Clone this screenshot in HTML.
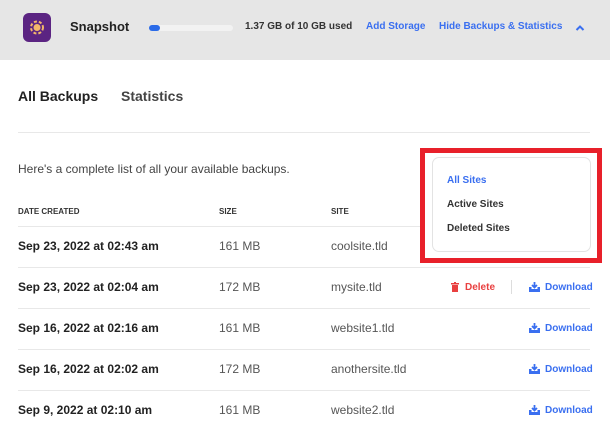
<!DOCTYPE html>
<html><head><style>
*{margin:0;padding:0;box-sizing:border-box}
body{width:610px;height:428px;overflow:hidden;background:#fff;font-family:"Liberation Sans",Arial,sans-serif;position:relative;color:#222}
.hdr{position:absolute;left:0;top:0;width:610px;height:60px;background:#e6e6e6}
.abs{position:absolute;white-space:nowrap}
.blue{color:#3a6ff0}
.line{position:absolute;height:1px;background:#e8e8e8}
.th{font-size:8px;font-weight:bold;color:#333;top:207px}
.d{font-size:12px;font-weight:bold;color:#222}
.s{font-size:12px;color:#555}
.dl{font-size:10px;font-weight:bold;color:#3a6ff0}
</style></head><body>
<div class="hdr"></div>
<div class="abs" style="left:23px;top:13px;width:28px;height:29px;background:#5b2482;border-radius:6px">
<svg width="28" height="29" viewBox="0 0 28 29"><circle cx="14" cy="14.5" r="3.5" fill="#f3b86a"/><circle cx="14" cy="14.5" r="6" fill="none" stroke="#f3b86a" stroke-width="2" stroke-dasharray="3 2"/></svg></div>
<div class="abs" style="left:70px;top:19px;font-size:13px;font-weight:bold;color:#222">Snapshot</div>
<div class="abs" style="left:149px;top:25px;width:84px;height:6px;background:#f2f2f2;border-radius:3px"><div style="width:11px;height:6px;background:#2b6be8;border-radius:3px"></div></div>
<div class="abs" style="left:245px;top:21px;font-size:10px;font-weight:bold;color:#333">1.37 GB of 10 GB used</div>
<div class="abs blue" style="left:366px;top:21px;font-size:10px;font-weight:bold">Add Storage</div>
<div class="abs blue" style="left:439px;top:21px;font-size:10px;font-weight:bold">Hide Backups &amp; Statistics</div>
<svg class="abs" style="left:575px;top:24px" width="10" height="8" viewBox="0 0 10 8"><path d="M1.5 6L5 2.5 8.5 6" fill="none" stroke="#3a6ff0" stroke-width="2"/></svg>
<div class="abs" style="left:18px;top:88px;font-size:14px;font-weight:bold;color:#222">All Backups</div>
<div class="abs" style="left:121px;top:88px;font-size:14px;font-weight:bold;color:#444">Statistics</div>
<div class="line" style="left:18px;top:132px;width:572px"></div>
<div class="abs" style="left:18px;top:162px;font-size:12px;color:#444">Here's a complete list of all your available backups.</div>
<div class="abs th" style="left:18px">DATE CREATED</div>
<div class="abs th" style="left:219px">SIZE</div>
<div class="abs th" style="left:331px">SITE</div>
<div class="line" style="left:18px;top:226px;width:572px"></div>
<div class="line" style="left:18px;top:267px;width:572px"></div>
<div class="line" style="left:18px;top:308px;width:572px"></div>
<div class="line" style="left:18px;top:349px;width:572px"></div>
<div class="line" style="left:18px;top:390px;width:572px"></div>

<div class="abs d" style="left:18px;top:239px">Sep 23, 2022 at 02:43 am</div><div class="abs s" style="left:219px;top:239px">161 MB</div><div class="abs s" style="left:331px;top:239px">coolsite.tld</div>
<div class="abs d" style="left:18px;top:280px">Sep 23, 2022 at 02:04 am</div><div class="abs s" style="left:219px;top:280px">172 MB</div><div class="abs s" style="left:331px;top:280px">mysite.tld</div>
<div class="abs d" style="left:18px;top:321px">Sep 16, 2022 at 02:16 am</div><div class="abs s" style="left:219px;top:321px">161 MB</div><div class="abs s" style="left:331px;top:321px">website1.tld</div>
<div class="abs d" style="left:18px;top:362px">Sep 16, 2022 at 02:02 am</div><div class="abs s" style="left:219px;top:362px">172 MB</div><div class="abs s" style="left:331px;top:362px">anothersite.tld</div>
<div class="abs d" style="left:18px;top:403px">Sep 9, 2022 at 02:10 am</div><div class="abs s" style="left:219px;top:403px">161 MB</div><div class="abs s" style="left:331px;top:403px">website2.tld</div>

<svg class="abs" style="left:451px;top:282px" width="8" height="10" viewBox="0 0 8 10"><rect x="0" y="1" width="8" height="1.5" fill="#e94040"/><rect x="3" y="0" width="2" height="1" fill="#e94040"/><rect x="1" y="3" width="6" height="7" fill="#e94040"/></svg>
<div class="abs" style="left:465px;top:282px;font-size:10px;font-weight:bold;color:#e94040">Delete</div>
<div class="abs" style="left:511px;top:280px;width:1px;height:14px;background:#ddd"></div>
<svg style="display:none"><symbol id="dli" viewBox="0 0 11 10"><path d="M5.5 0v5M3 3l2.5 2.5L8 3" stroke="#3a6ff0" stroke-width="1.8" fill="none"/><path d="M0 5h2.5v2h6V5H11v5H0z" fill="#3a6ff0"/></symbol></svg>
<svg class="abs" style="left:529px;top:282px" width="11" height="10"><use href="#dli"/></svg><div class="abs dl" style="left:545px;top:282px">Download</div>
<svg class="abs" style="left:529px;top:323px" width="11" height="10"><use href="#dli"/></svg><div class="abs dl" style="left:545px;top:323px">Download</div>
<svg class="abs" style="left:529px;top:364px" width="11" height="10"><use href="#dli"/></svg><div class="abs dl" style="left:545px;top:364px">Download</div>
<svg class="abs" style="left:529px;top:405px" width="11" height="10"><use href="#dli"/></svg><div class="abs dl" style="left:545px;top:405px">Download</div>

<div class="abs" style="left:420px;top:148px;width:182px;height:115px;border:5px solid #e8202a;background:#fff"></div>
<div class="abs" style="left:432px;top:157px;width:159px;height:95px;border:1px solid #e3e3e3;border-radius:7px;background:#fff"></div>
<div class="abs blue" style="left:447px;top:175px;font-size:10px;font-weight:bold">All Sites</div>
<div class="abs" style="left:447px;top:199px;font-size:10px;font-weight:bold;color:#333">Active Sites</div>
<div class="abs" style="left:447px;top:223px;font-size:10px;font-weight:bold;color:#333">Deleted Sites</div>
</body></html>
